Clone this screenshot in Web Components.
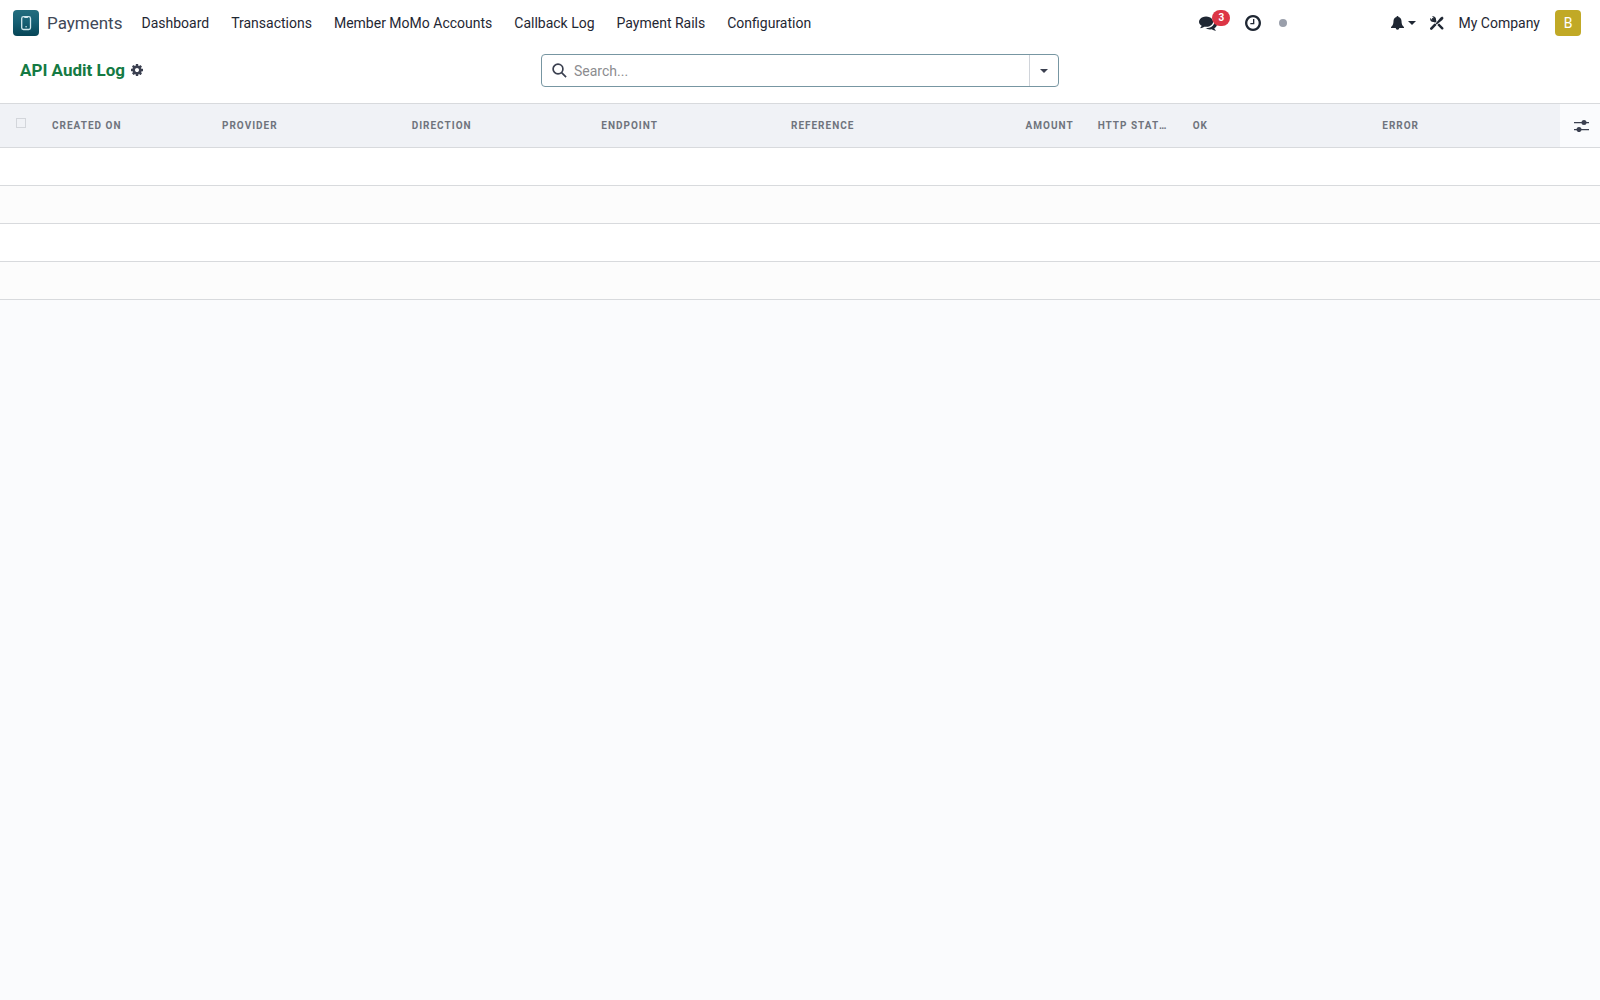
<!DOCTYPE html>
<html lang="en">
<head>
<meta charset="utf-8">
<title>API Audit Log</title>
<style>
body { margin: 0; min-height: 100vh; background: #fafbfd; font-family: Roboto, "Liberation Sans", sans-serif; font-size: 14px; line-height: 20px; color: #1f2733; }
</style>
</head>
<body>
<payments-app></payments-app>
<script>
const define = (name, html) => {
  const template = document.createElement('template');
  template.innerHTML = html;
  customElements.define(name, class extends HTMLElement {
    constructor() {
      super();
      this.attachShadow({ mode: 'open' }).append(template.content.cloneNode(true));
    }
  });
};

const reset = `
  * { box-sizing: border-box; }
  button { border: 0; padding: 0; margin: 0; background: none; font: inherit; color: inherit; cursor: pointer; }
  svg { display: block; fill: currentColor; }
`;

define('nav-link', `
<style>
  :host { display: block; }
  a { display: block; padding: 0 11px; color: inherit; text-decoration: none; white-space: nowrap; }
</style>
<a href="#"><slot></slot></a>`);

define('app-brand', `
<style>${reset}
  :host { display: block; }
  a { display: flex; align-items: center; gap: 8px; color: #414857; text-decoration: none; font-size: 17px; }
  .logo { display: block; }
</style>
<a href="#">
  <svg class="logo" width="26" height="26" viewBox="0 0 26 26" aria-hidden="true">
    <defs><linearGradient id="g" x1="0" y1="0" x2="0" y2="1">
      <stop offset="0" stop-color="#236d7e"/><stop offset=".45" stop-color="#176074"/><stop offset="1" stop-color="#064556"/>
    </linearGradient></defs>
    <rect width="26" height="26" rx="4" fill="url(#g)"/>
    <rect x="8.7" y="6.7" width="8.8" height="12.8" rx="1.8" fill="none" stroke="#d3e9ee" stroke-width="1.3"/>
    <path d="M11.3 6.8h3.6v1.2h-3.6z" fill="#d3e9ee"/>
    <circle cx="13.1" cy="16.7" r=".8" fill="#d3e9ee"/>
  </svg>
  <span><slot></slot></span>
</a>`);

define('system-tray', `
<style>${reset}
  :host { display: flex; align-items: center; }
  button { display: flex; align-items: center; }
  .chat { position: relative; margin-right: 28px; }
  .badge { position: absolute; left: 13px; top: -4px; width: 18px; height: 16px; border-radius: 8px; background: #dc3545; color: #fff; font-size: 10px; font-weight: 700; line-height: 16px; text-align: center; }
  .clock { margin-right: 18px; }
  .status { width: 8px; height: 8px; border-radius: 50%; background: #9a9fab; margin-right: 104px; }
  .bell { gap: 4px; margin-right: 14px; }
  .tools { margin-right: 14px; }
  .company { margin-right: 15px; }
  .avatar { width: 26px; height: 26px; border-radius: 4px; background: #c1a926; color: #fff; justify-content: center; }
</style>
<button class="chat" aria-label="Messages">
  <svg width="18" height="18" viewBox="0 0 1792 1792"><path d="M1408 768q0 139-94 257t-256.500 186.500-353.500 68.500q-86 0-176-16-124 88-278 128-36 9-86 16h-3q-11 0-20.500-8t-11.500-21q-1-3-1-6.500t.5-6.500 2-6l2.500-5 3.500-5.500 4-5 4.500-5 4-4.500q5-6 23-25t26-29.500 22.500-29 25-38.500 20.500-44q-124-72-195-177t-71-224q0-139 94-257t256.500-186.500 353.500-68.500 353.500 68.500 256.500 186.500 94 257zm384 256q0 120-71 224.500t-195 176.500q10 24 20.500 44t25 38.500 22.500 29 26 29.500 23 25q1 1 4 4.500t4.500 5 4 5 3.500 5.500l2.500 5 2 6 .5 6.500-1 6.500q-3 14-13 22t-22 7q-50-7-86-16-154-40-278-128-90 16-176 16-271 0-472-132 58 4 88 4 161 0 309-45t264-129q125-92 192-212t67-254q0-77-23-152 129 71 204 178t75 230z"/></svg>
  <span class="badge">3</span>
</button>
<button class="clock" aria-label="Activities">
  <svg width="16" height="16" viewBox="128 128 1536 1536"><path d="M1024 544v448q0 14-9 23t-23 9h-320q-14 0-23-9t-9-23v-64q0-14 9-23t23-9h224v-352q0-14 9-23t23-9h64q14 0 23 9t9 23zm416 352q0-148-73-273t-198-198-273-73-273 73-198 198-73 273 73 273 198 198 273 73 273-73 198-198 73-273zm224 0q0 209-103 385.500t-279.500 279.500-385.500 103-385.500-103-279.500-279.500-103-385.500 103-385.500 279.500-279.500 385.500-103 385.500 103 279.500 279.500 103 385.500z"/></svg>
</button>
<span class="status"></span>
<button class="bell" aria-label="Notifications">
  <svg width="13" height="14" viewBox="0 0 13 14"><path d="M6.500 0a.9.9 0 0 0-.9 1.100C3.500 1.500 2.500 3.200 2.500 5.100c0 3.200-.9 4.700-2.500 5.900v.5q0 .5.500.5h4.200a1.800 1.800 0 0 0 3.600 0h4.200q.5 0 .5-.5V11c-1.600-1.200-2.500-2.700-2.500-5.900 0-1.900-1-3.600-3.100-4A.9.9 0 0 0 6.500 0z"/></svg>
  <svg width="8" height="4" viewBox="0 0 8 4"><path d="M0 0h8L4 4z"/></svg>
</button>
<button class="tools" aria-label="Developer tools">
  <svg width="14" height="14" viewBox="0 0 14 14">
    <path d="M3 3l9.300 9.300" fill="none" stroke="currentColor" stroke-width="2.400" stroke-linecap="round"/>
    <path d="M.3 2L2.500 4.200 4.200 2.500 2 .3C4.200-.4 6.200 1.300 6 3.500L6.100 5.300 5 6.200 3.500 6C1.300 6.200-.4 4.200.3 2z"/>
    <path d="M13.300.6L5.500 8.700" fill="none" stroke="#fff" stroke-width="3.200"/>
    <path d="M4.900 8.900L1.300 12.600" fill="none" stroke="currentColor" stroke-width="2.600" stroke-linecap="round"/>
    <path d="M12.200.5l1.400 1.400-1.200 2L6.700 8.500l-1-1 4.600-5.700z"/>
  </svg>
</button>
<button class="company">My Company</button>
<button class="avatar" aria-label="User menu"><span>B</span></button>`);

define('app-navbar', `
<style>
  :host { display: flex; align-items: center; height: 46px; padding: 0 19px 0 13px; background: #fff; }
  nav { display: flex; margin-left: 8px; flex: 1; }
</style>
<app-brand>Payments</app-brand>
<nav><slot></slot></nav>
<system-tray></system-tray>`);

define('search-box', `
<style>${reset}
  :host { display: block; }
  .box { display: flex; height: 33px; border: 1px solid #7796a2; border-radius: 4px; background: #fff; overflow: hidden; color: #3b4050; }
  label { display: flex; flex: 1; align-items: center; gap: 7px; padding-left: 10px; }
  svg.lens { fill: none; stroke: currentColor; }
  input { flex: 1; min-width: 0; height: 30px; border: 0; outline: 0; padding: 0; background: none; font: inherit; color: inherit; }
  input::placeholder { color: #8c8c8f; opacity: 1; }
  button { display: flex; align-items: center; justify-content: center; width: 29px; border-left: 1px solid #d0d4da; }
</style>
<div class="box" role="search">
  <label>
    <svg class="lens" width="15" height="15" viewBox="0 0 15 15" stroke-width="1.700"><circle cx="6" cy="6" r="4.900"/><path d="M9.600 9.600l4.500 4.500"/></svg>
    <input type="text" placeholder="Search..." aria-label="Search">
  </label>
  <button aria-label="Toggle filters"><svg width="8" height="4" viewBox="0 0 8 4"><path d="M0 0h8L4 4z"/></svg></button>
</div>`);

define('control-panel', `
<style>${reset}
  :host { display: grid; grid-template-columns: 1fr 518px 1fr; align-items: start; padding: 8px 20px 16px; background: #fff; }
  .crumb { display: flex; align-items: center; gap: 6px; height: 32px; }
  h1 { margin: 0; font-size: 17px; font-weight: 700; line-height: 24px; color: #147a43; }
  button { color: #3b4050; }
</style>
<div class="crumb">
  <h1><slot></slot></h1>
  <button aria-label="Actions"><svg width="12" height="12" viewBox="128 128 1536 1536"><path d="M1152 896q0-106-75-181t-181-75-181 75-75 181 75 181 181 75 181-75 75-181zm512-109v222q0 12-8 23t-20 13l-185 28q-19 54-39 91 35 50 107 138 10 12 10 25t-9 23q-27 37-99 108t-94 71q-12 0-26-9l-138-108q-44 23-91 38-16 136-29 186-7 28-36 28h-222q-14 0-24.500-8.500t-11.500-21.500l-28-184q-49-16-90-37l-141 107q-10 9-25 9-14 0-25-11-126-114-165-168-7-10-7-23 0-12 8-23 15-21 51-66.500t54-70.500q-27-50-41-99l-183-27q-13-2-21-12.500t-8-23.500v-222q0-12 8-23t19-13l186-28q14-46 39-92-40-57-107-138-10-12-10-24 0-10 9-23 26-36 98.500-107.500t94.500-71.500q13 0 26 10l138 107q44-23 91-38 16-136 29-186 7-28 36-28h222q14 0 24.500 8.500t11.500 21.500l28 184q49 16 90 37l142-107q9-9 24-9 13 0 25 10 129 119 165 170 7 8 7 22 0 12-8 23-15 21-51 66.500t-54 70.500q26 50 41 98l183 28q13 2 21 12.500t8 23.500z"/></svg></button>
</div>
<search-box></search-box>`);

define('log-table', `
<style>${reset}
  :host { display: block; }
  table { width: 100%; table-layout: fixed; border-collapse: separate; border-spacing: 0; border-top: 1px solid #d8dadd; }
  th, td { border-bottom: 1px solid #d8dadd; }
  th { height: 44px; padding: 0 12px; background: #f0f2f6; color: #6f747d; font-size: 10px; font-weight: 700; line-height: 16px; letter-spacing: 1px; text-align: left; text-transform: uppercase; white-space: nowrap; overflow: hidden; text-overflow: ellipsis; }
  th.num { text-align: right; }
  th.pick { padding: 0 0 6px 16px; line-height: 0; }
  th.opts { padding: 0 0 0 14px; background: #fafbfd; color: #3b4050; }
  .opts button { display: block; }
  td { height: 38px; padding: 0; background: #fff; }
  tr:nth-child(even) td { background: #fcfcfc; }
  input { appearance: none; display: block; width: 10px; height: 10px; margin: 0; border: 1px solid #d3d6db; }
  .c-pick, .c-opts { width: 40px; }
  .c-date { width: 170px; }
  .c-amount { width: 117px; }
  .c-http { width: 95px; }
</style>
<table>
  <colgroup><col class="c-pick"><col class="c-date"><col><col><col><col><col class="c-amount"><col class="c-http"><col><col><col class="c-opts"></colgroup>
  <thead><tr>
    <th class="pick"><input type="checkbox" aria-label="Select all"></th>
    <th>Created on</th><th>Provider</th><th>Direction</th><th>Endpoint</th><th>Reference</th>
    <th class="num">Amount</th><th>HTTP Status</th><th>OK</th><th>Error</th>
    <th class="opts"><button aria-label="Optional columns"><svg width="15" height="12" viewBox="0 0 15 12"><path d="M0 2h15v1.200H0zM0 9h15v1.200H0z"/><circle cx="10" cy="2.600" r="2.500"/><circle cx="5" cy="9.600" r="2.500"/></svg></button></th>
  </tr></thead>
  <tbody>
    <tr><td colspan="11"></td></tr>
    <tr><td colspan="11"></td></tr>
    <tr><td colspan="11"></td></tr>
    <tr><td colspan="11"></td></tr>
  </tbody>
</table>`);

define('payments-app', `
<style>:host { display: block; }</style>
<app-navbar>
  <nav-link>Dashboard</nav-link>
  <nav-link>Transactions</nav-link>
  <nav-link>Member MoMo Accounts</nav-link>
  <nav-link>Callback Log</nav-link>
  <nav-link>Payment Rails</nav-link>
  <nav-link>Configuration</nav-link>
</app-navbar>
<control-panel>API Audit Log</control-panel>
<log-table></log-table>`);
</script>
</body>
</html>
